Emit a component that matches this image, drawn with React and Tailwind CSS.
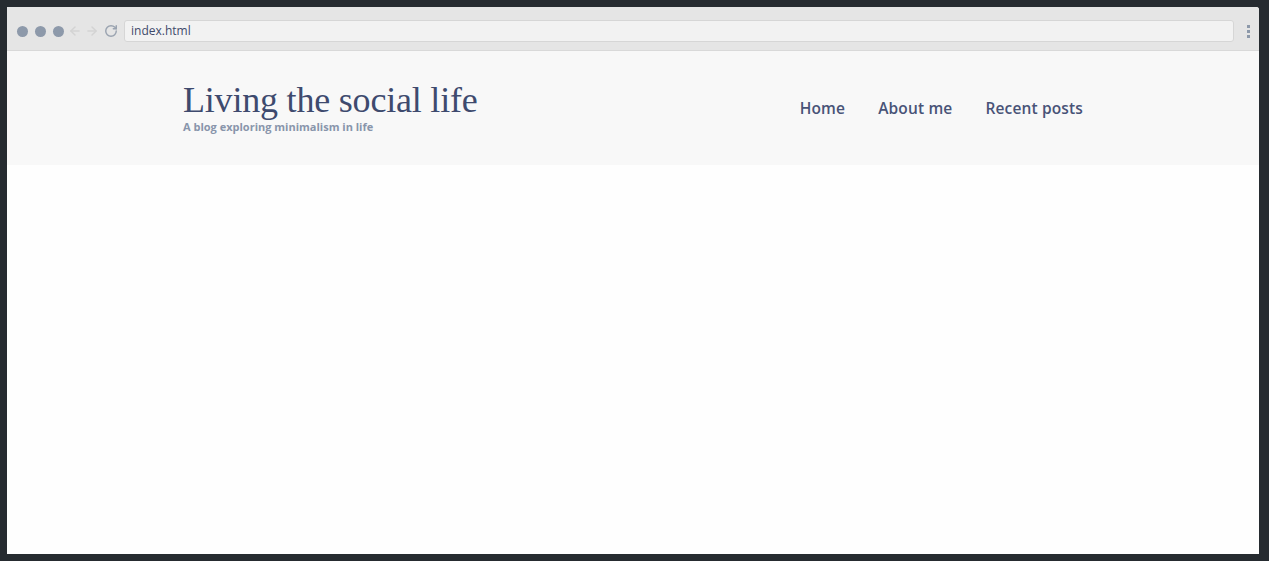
import { RotateCw, ArrowLeft, ArrowRight } from 'lucide-react';

export default function App() {
  return (
    <div className="w-[1269px] h-[561px] bg-[#262b30] pt-[7px] pl-[7px] pr-[10px] pb-[7px]">
      <div className="h-full flex flex-col bg-white rounded-tr-[3px] overflow-hidden">
        {/* browser chrome */}
        <div className="h-[44px] bg-[#e5e5e5] border-b border-[#d9d9d9] flex items-center pl-[10px] pr-[8px] gap-[6px] pt-[5px]">
          <span className="w-[11px] h-[11px] rounded-full bg-[#8d99aa]" />
          <span className="w-[11px] h-[11px] rounded-full bg-[#8d99aa] ml-[1px]" />
          <span className="w-[11px] h-[11px] rounded-full bg-[#8d99aa] ml-[1px]" />
          <ArrowLeft className="w-[14px] h-[14px] text-[#d3d3d3] ml-[-2px]" strokeWidth={2.5} />
          <ArrowRight className="w-[14px] h-[14px] text-[#d3d3d3] ml-[-3px]" strokeWidth={2.5} />
          <RotateCw className="w-[14px] h-[14px] text-[#9aa3b0] ml-[-1px]" strokeWidth={2.5} />
          <div className="flex-1 h-[22px] ml-[0px] bg-[#f2f2f2] border border-[#d6d6d6] rounded-[3px] flex items-center px-[6px] text-[12px] text-[#3f4a6b] font-['Open_Sans',sans-serif]">
            index.html
          </div>
          <div className="flex flex-col gap-[2px] ml-[7px] mr-[1px]">
            <span className="w-[3px] h-[3px] bg-[#8d99aa]" />
            <span className="w-[3px] h-[3px] bg-[#8d99aa]" />
            <span className="w-[3px] h-[3px] bg-[#8d99aa]" />
          </div>
        </div>

        {/* site header */}
        <header className="h-[114px] bg-[#f8f8f8] flex items-start justify-between pt-[34px] pl-[176px] pr-[176px]">
          <div className="flex flex-col">
            <h1 className="font-['Liberation_Serif',serif] text-[36px] leading-[30px] text-[#3e4a6e] tracking-[-0.2px]">
              Living the social life
            </h1>
            <p className="font-['Open_Sans',sans-serif] font-bold text-[11px] leading-[14px] text-[#8895ab] mt-[5px]">
              A blog exploring minimalism in life
            </p>
          </div>
          <nav className="flex gap-[33px] font-['Open_Sans',sans-serif] font-semibold text-[15.5px] leading-[20px] tracking-[0.15px] text-[#485377] mt-[13px]">
            <a>Home</a>
            <a>About me</a>
            <a>Recent posts</a>
          </nav>
        </header>

        <main className="flex-1 bg-[#fefefe]" />
      </div>
    </div>
  );
}
